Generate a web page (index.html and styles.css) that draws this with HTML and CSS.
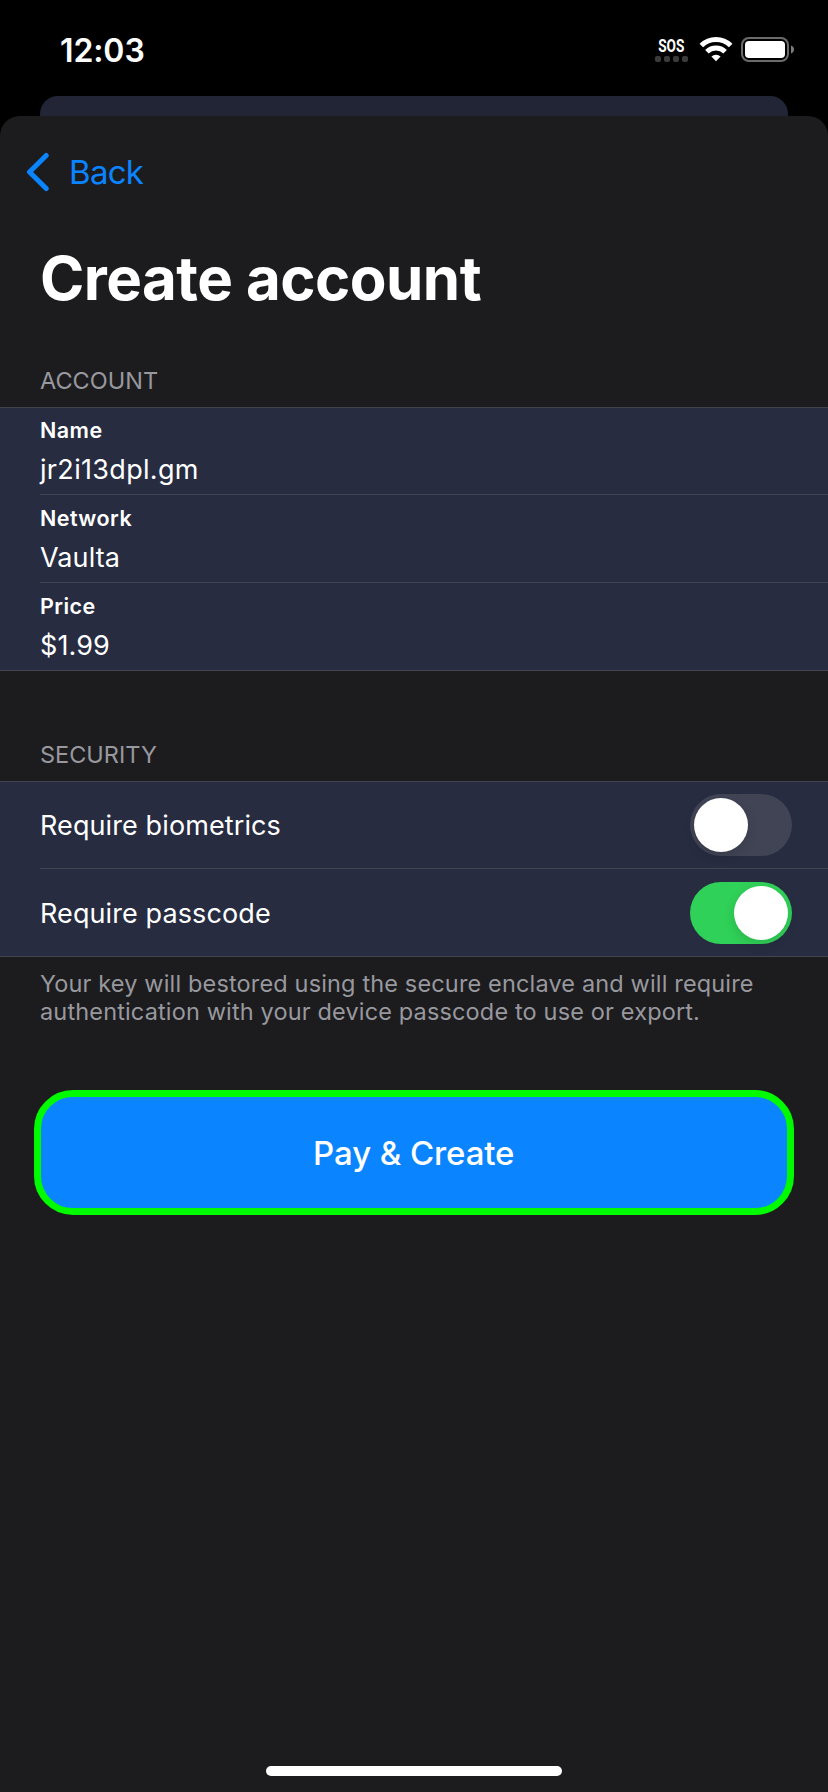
FILE: index.html
```
<!DOCTYPE html>
<html lang="en">
<head>
<meta charset="utf-8">
<title>Create account</title>
<link rel="stylesheet" href="styles.css">
</head>
<body>
<div class="screen">
  <header class="status">
    <span class="time">12:03</span>
    <div class="indicators">
      <div class="sos"><span class="sos-text">SOS</span><div class="dots"><i></i><i></i><i></i><i></i></div></div>
      <svg class="wifi" width="34" height="26" viewBox="0 0 34 26"><g fill="none" stroke="#fff" stroke-width="5"><path d="M2.3 8.600a20.800 20.800 0 0 1 29.400 0"/><path d="M7.900 14.700a13 13 0 0 1 18.200 0"/></g><path d="M17 24.200l-4.600-4.700a6.600 6.600 0 0 1 9.200 0z" fill="#fff"/></svg>
      <svg class="battery" width="54" height="26" viewBox="0 0 54 26"><rect x="1" y="1" width="46" height="23" rx="7" fill="none" stroke="#6b6b6b" stroke-width="2"/><rect x="4" y="4" width="40" height="17" rx="4" fill="#fff"/><path d="M50 8.500c4 1.300 4 6.700 0 8z" fill="#7d7d7d"/></svg>
    </div>
  </header>
  <div class="peek"></div>
  <main class="sheet">
    <nav class="nav"><svg width="24" height="40" viewBox="0 0 24 40"><path d="M20.200 3.500L3.500 20l16.700 16.500" fill="none" stroke="#0a84ff" stroke-width="5" stroke-linecap="round" stroke-linejoin="round"/></svg><span class="back">Back</span></nav>
    <h1 class="title">Create account</h1>
    <h2 class="heading account">ACCOUNT</h2>
    <section class="group">
      <div class="row field"><span class="label">Name</span><span class="value name">jr2i13dpl.gm</span></div>
      <div class="row field"><span class="label">Network</span><span class="value">Vaulta</span></div>
      <div class="row field"><span class="label">Price</span><span class="value">$1.99</span></div>
    </section>
    <h2 class="heading security">SECURITY</h2>
    <section class="group toggles">
      <div class="row option"><span class="value">Require biometrics</span><span class="toggle"><b></b></span></div>
      <div class="row option"><span class="value">Require passcode</span><span class="toggle on"><b></b></span></div>
    </section>
    <p class="note">Your key will bestored using the secure enclave and will require<br>authentication with your device passcode to use or export.</p>
    <button class="pay">Pay &amp; Create</button>
    <div class="home"></div>
  </main>
</div>
</body>
</html>
```
FILE: styles.css
```
* { box-sizing: border-box; margin: 0; padding: 0; }
body { background: #000; font-family: Inter, "Liberation Sans", sans-serif; color: #fff; }
.screen { height: 1792px; display: flex; flex-direction: column; overflow: hidden; }
.status { height: 96px; padding: 0 33px 0 60px; display: flex; justify-content: space-between; }
.time { font-size: 32px; font-weight: 600; line-height: 101px; letter-spacing: -0.1px; }
.indicators { display: flex; padding-top: 37px; }
.sos { width: 33px; margin-right: 11px; display: flex; flex-direction: column; align-items: center; }
.sos-text { font: 700 18px/18px Roboto, sans-serif; transform: scaleX(.76); }
.dots { display: flex; gap: 3px; margin-top: 1px; }
.dots i { width: 6px; height: 6px; border-radius: 2px; background: #3b3b3b; }
.wifi { margin-right: 8px; }
.peek { height: 20px; margin: 0 40px; background: #212536; border-radius: 18px 18px 0 0; }
.sheet { flex: 1; background: #1c1c1e; border-radius: 20px 20px 0 0; display: flex; flex-direction: column; }
.nav { height: 112px; padding: 0 26px; display: flex; align-items: center; gap: 19px; }
.back { font-size: 33px; letter-spacing: -0.7px; color: #0a84ff; }
.title { height: 100px; padding-left: 40px; font-size: 60px; font-weight: 700; line-height: 100px; letter-spacing: -0.55px; }
.heading { padding-left: 40px; font-size: 23.5px; font-weight: 400; line-height: 30px; color: #98989f; }
.account { padding-top: 38px; height: 79px; }
.security { padding-top: 69px; height: 110px; }
.group { background: #272c41; border-bottom: 1px solid #424450; box-shadow: inset 0 1px #424450; height: 264px; }
.toggles { height: 176px; }
.row { height: 88px; margin-left: 40px; border-bottom: 1px solid #424450; display: flex; }
.row:last-child { border-bottom: 0; }
.field { flex-direction: column; align-items: flex-start; padding-top: 8px; }
.label { font-size: 21.5px; font-weight: 600; line-height: 30px; letter-spacing: 0.45px; }
.value { font-size: 27px; line-height: 50px; letter-spacing: 0.1px; }
.name { letter-spacing: 0.32px; }
.option .value { padding-top: 2px; }
.option { align-items: center; justify-content: space-between; padding-right: 36px; }
.toggle { width: 102px; height: 62px; padding: 4px; border-radius: 31px; background: #404454; display: flex; }
.toggle b { width: 54px; height: 54px; border-radius: 50%; background: #fff; box-shadow: 0 4px 12px rgba(0,0,0,.14); }
.toggle.on { background: #30d158; justify-content: flex-end; }
.note { padding: 13px 0 0 40px; height: 133px; font-size: 23.5px; line-height: 28px; letter-spacing: 0.15px; color: #98989f; white-space: nowrap; }
.pay { width: 760.5px; height: 125px; margin-left: 33.5px; flex: none; border: 7px solid #00fa00; border-radius: 39px; background: #0a84ff; color: #fff; font: 500 33px Inter, sans-serif; letter-spacing: -0.1px; }
.home { width: 296px; height: 10px; margin: auto auto 16px; border-radius: 5px; background: #fff; }
```
